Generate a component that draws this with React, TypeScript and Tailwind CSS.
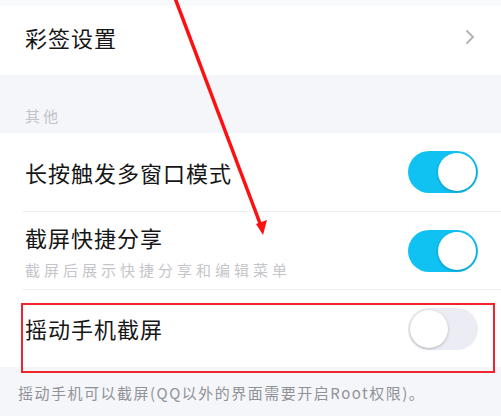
import React from "react";

const font = { fontFamily: '"Noto Sans CJK SC", "Noto Sans", sans-serif' };

const Toggle = ({ on }: { on: boolean }) => (
  <div
    className={
      "relative h-[42px] w-[70px] rounded-full " +
      (on ? "bg-[#10c2f2]" : "bg-[#ececf4]")
    }
  >
    <div
      className={
        "absolute top-[2px] h-[38px] w-[38px] rounded-full bg-white shadow-[0_1px_3px_rgba(0,0,0,0.25)] " +
        (on ? "right-[2px]" : "left-[2px]")
      }
    />
  </div>
);

export default function App() {
  return (
    <div
      className="relative h-[416px] w-[501px] overflow-hidden bg-[#f4f6fa] text-[#161616]"
      style={font}
    >
      <div className="h-[6px] bg-[#f8f9fb]" />

      {/* 彩签设置 */}
      <div className="flex h-[69px] items-center justify-between bg-white pb-[7px] pl-[25px] pr-[26px]">
        <span className="text-[22px] tracking-[1px]">彩签设置</span>
        <svg width="10" height="16" viewBox="0 0 10 16" fill="none">
          <path d="M1.5 1.5 L8 8 L1.5 14.5" stroke="#b4b4b8" strokeWidth="2" />
        </svg>
      </div>

      {/* 其他 */}
      <div className="flex h-[58px] items-end pb-[6px] pl-[25px]">
        <span className="text-[15px] tracking-[3px] text-[#c2c4c8]">其他</span>
      </div>

      <div className="bg-white">
        <div className="flex h-[78px] items-center justify-between pl-[25px] pr-[23px]">
          <span className="text-[22px] tracking-[1px]">长按触发多窗口模式</span>
          <Toggle on />
        </div>
        <div className="ml-[22px] h-px bg-[#eeeff2]" />

        <div className="flex h-[77px] items-center justify-between pl-[25px] pr-[23px]">
          <div className="flex flex-col gap-[7px] pt-[2px]">
            <span className="text-[22px] leading-[30px] tracking-[1px]">截屏快捷分享</span>
            <span className="text-[15px] leading-[22px] tracking-[4px] text-[#c4c6ca]">
              截屏后展示快捷分享和编辑菜单
            </span>
          </div>
          <Toggle on />
        </div>
        <div className="ml-[22px] h-px bg-[#eeeff2]" />

        <div className="flex h-[77px] items-center justify-between pl-[25px] pr-[23px]">
          <span className="text-[22px] tracking-[1px]">摇动手机截屏</span>
          <Toggle on={false} />
        </div>
      </div>

      <div className="flex h-[49px] items-center pl-[18px] pt-[4px]">
        <span className="text-[15px] tracking-[1.5px] text-[#909296]">
          摇动手机可以截屏(QQ以外的界面需要开启Root权限)。
        </span>
      </div>

      {/* annotation overlay */}
      <div className="pointer-events-none absolute left-[21px] top-[303px] h-[70px] w-[474px] border-2 border-[#f0242a]" />
      <svg
        className="pointer-events-none absolute left-0 top-0"
        width="501"
        height="416"
        viewBox="0 0 501 416"
      >
        <line x1="175" y1="-2" x2="261" y2="226" stroke="#ff1010" strokeWidth="3.5" />
        <polygon points="263,235 256,224 267,220" fill="#ff1010" />
      </svg>
    </div>
  );
}
